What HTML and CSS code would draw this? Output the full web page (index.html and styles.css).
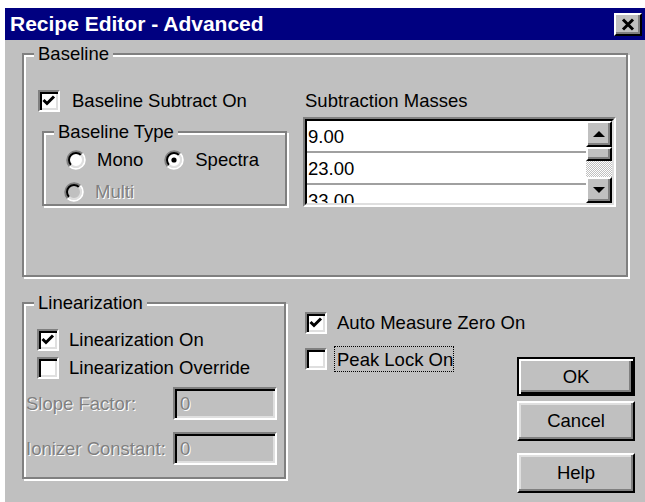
FILE: index.html
```html
<!DOCTYPE html>
<html lang="en">
<head>
<meta charset="utf-8">
<title>Recipe Editor - Advanced</title>
<link rel="stylesheet" href="styles.css">
</head>
<body>
<div class="dialog">
  <div class="titlebar">
    <span class="title">Recipe Editor - Advanced</span>
    <button class="close" type="button" aria-label="Close">
      <svg viewBox="0 0 23 19" width="23" height="19"><path d="M6 4.5 L16 14.5 M16 4.5 L6 14.5" stroke="#000" stroke-width="3" fill="none"/></svg>
    </button>
  </div>

  <div class="client">
    <div class="group baseline">
      <div class="group-title">Baseline</div>
      <div class="baseline-grid">
        <div class="col-left">
          <div class="check check-wide">
            <span class="box"><svg viewBox="0 0 18 18" width="18" height="18"><path d="M3.5 8 L7 11.5 L14 4.5" stroke="#000" stroke-width="3" fill="none"/></svg></span>
            <span>Baseline Subtract On</span>
          </div>
          <div class="group type-group">
            <div class="group-title">Baseline Type</div>
            <div class="radio-row">
              <div class="opt">
                <svg class="radio" viewBox="0 0 20 20" width="20" height="20">
                  <circle cx="10" cy="10" r="7" fill="#fff"/>
                  <path d="M3.64 16.36 A9 9 0 0 1 16.36 3.64" stroke="#808080" stroke-width="2" fill="none"/>
                  <path d="M16.36 3.64 A9 9 0 0 1 3.64 16.36" stroke="#fff" stroke-width="2" fill="none"/>
                  <path d="M5.05 14.95 A7 7 0 0 1 14.95 5.05" stroke="#000" stroke-width="2" fill="none"/>
                  <path d="M14.95 5.05 A7 7 0 0 1 5.05 14.95" stroke="#dfdfdf" stroke-width="2" fill="none"/>
                </svg>
                <span>Mono</span>
              </div>
              <div class="opt">
                <svg class="radio" viewBox="0 0 20 20" width="20" height="20">
                  <circle cx="10" cy="10" r="7" fill="#fff"/>
                  <path d="M3.64 16.36 A9 9 0 0 1 16.36 3.64" stroke="#808080" stroke-width="2" fill="none"/>
                  <path d="M16.36 3.64 A9 9 0 0 1 3.64 16.36" stroke="#fff" stroke-width="2" fill="none"/>
                  <path d="M5.05 14.95 A7 7 0 0 1 14.95 5.05" stroke="#000" stroke-width="2" fill="none"/>
                  <path d="M14.95 5.05 A7 7 0 0 1 5.05 14.95" stroke="#dfdfdf" stroke-width="2" fill="none"/>
                  <circle cx="10" cy="10" r="2.6" fill="#000"/>
                </svg>
                <span>Spectra</span>
              </div>
            </div>
            <div class="radio-row second">
              <div class="opt disabled">
                <svg class="radio" viewBox="0 0 20 20" width="20" height="20">
                  <circle cx="10" cy="10" r="7" fill="#c0c0c0"/>
                  <path d="M3.64 16.36 A9 9 0 0 1 16.36 3.64" stroke="#808080" stroke-width="2" fill="none"/>
                  <path d="M16.36 3.64 A9 9 0 0 1 3.64 16.36" stroke="#fff" stroke-width="2" fill="none"/>
                  <path d="M5.05 14.95 A7 7 0 0 1 14.95 5.05" stroke="#000" stroke-width="2" fill="none"/>
                  <path d="M14.95 5.05 A7 7 0 0 1 5.05 14.95" stroke="#dfdfdf" stroke-width="2" fill="none"/>
                </svg>
                <span class="dim">Multi</span>
              </div>
            </div>
          </div>
        </div>

        <div class="col-right">
          <div class="field-label">Subtraction Masses</div>
          <div class="listbox">
            <div class="list-inner">
              <div class="rows">
                <div class="row">9.00</div>
                <div class="row">23.00</div>
                <div class="row">33.00</div>
              </div>
              <div class="scrollbar">
                <div class="sb-btn"><svg viewBox="0 0 12 6" width="12" height="6"><path d="M0 6 L6 0 L12 6 Z" fill="#000"/></svg></div>
                <div class="sb-thumb"></div>
                <div class="sb-track"></div>
                <div class="sb-btn"><svg viewBox="0 0 12 6" width="12" height="6"><path d="M0 0 L12 0 L6 6 Z" fill="#000"/></svg></div>
              </div>
            </div>
          </div>
        </div>
      </div>
    </div>

    <div class="lower">
      <div class="group linear">
        <div class="group-title">Linearization</div>
        <div class="check lin-first">
          <span class="box"><svg viewBox="0 0 18 18" width="18" height="18"><path d="M3.5 8 L7 11.5 L14 4.5" stroke="#000" stroke-width="3" fill="none"/></svg></span>
          <span>Linearization On</span>
        </div>
        <div class="check lin-second">
          <span class="box"></span>
          <span>Linearization Override</span>
        </div>
        <div class="field first-field">
          <span class="dim">Slope Factor:</span>
          <span class="edit"><span class="dim">0</span></span>
        </div>
        <div class="field second-field">
          <span class="dim">Ionizer Constant:</span>
          <span class="edit"><span class="dim">0</span></span>
        </div>
      </div>

      <div class="options">
        <div class="check auto">
          <span class="box"><svg viewBox="0 0 18 18" width="18" height="18"><path d="M3.5 8 L7 11.5 L14 4.5" stroke="#000" stroke-width="3" fill="none"/></svg></span>
          <span>Auto Measure Zero On</span>
        </div>
        <div class="check peak">
          <span class="box"></span>
          <span class="focus">Peak Lock On</span>
        </div>
      </div>

      <div class="buttons">
        <button class="btn default" type="button">OK</button>
        <button class="btn cancel" type="button">Cancel</button>
        <button class="btn help" type="button">Help</button>
      </div>
    </div>
  </div>
</div>
</body>
</html>
```

FILE: styles.css
```css
html, body {
  margin: 0;
  padding: 0;
  background: #fff;
}

body {
  font-family: "Liberation Sans", Arial, sans-serif;
  font-size: 18.5px;
  color: #000;
}

.dialog {
  margin: 8px 0 0 5px;
  width: 640px;
  height: 494px;
  background: #c0c0c0;
}

/* caption bar */
.titlebar {
  height: 32px;
  background: #000080;
  display: flex;
  align-items: center;
  padding-left: 5px;
}

.title {
  color: #fff;
  font-weight: bold;
  font-size: 21px;
  line-height: 32px;
  white-space: nowrap;
}

.close {
  margin-left: auto;
  margin-right: 3px;
  width: 28px;
  height: 23px;
  padding: 0;
  background: #c0c0c0;
  border: 2px solid;
  border-color: #fff #000 #000 #fff;
  box-shadow: inset -2px -2px 0 #808080;
  display: flex;
  align-items: center;
  justify-content: center;
}

.client {
  padding: 13px 0 0 17px;
}

/* etched group frames */
.group {
  box-sizing: border-box;
  border: 2px solid #808080;
  box-shadow: inset 2px 2px 0 #fff, 2px 2px 0 #fff;
}

.group-title {
  width: fit-content;
  margin: -12px 0 0 10px;
  padding: 0 4px;
  background: #c0c0c0;
  line-height: 21px;
  height: 21px;
  white-space: nowrap;
}

.baseline {
  width: 606px;
  height: 224px;
}

.baseline-grid {
  display: grid;
  grid-template-columns: 265px 313px;
  margin-top: 26px;
  padding-left: 14px;
}

/* checkboxes */
.check {
  display: flex;
  align-items: center;
  gap: 10px;
  height: 22px;
  white-space: nowrap;
}

.check-wide {
  gap: 12px;
}

.box {
  box-sizing: border-box;
  width: 22px;
  height: 22px;
  flex: none;
  background: #fff;
  border: 2px solid;
  border-color: #808080 #fff #fff #808080;
  box-shadow: inset 2px 2px 0 #000, inset -2px -2px 0 #dfdfdf;
  display: flex;
  align-items: center;
  justify-content: center;
}

.box svg {
  display: block;
}

/* radio group */
.type-group {
  margin: 19px 0 0 4px;
  width: 245px;
  height: 75px;
}

.radio-row {
  display: flex;
  align-items: center;
  gap: 21px;
  height: 22px;
  margin-top: 7px;
  padding-left: 22px;
}

.radio-row.second {
  margin-top: 10px;
  padding-left: 20px;
}

.opt {
  display: flex;
  align-items: center;
  gap: 11px;
  white-space: nowrap;
}

.radio {
  display: block;
  flex: none;
}

.dim {
  color: #808080;
  text-shadow: 1px 1px 0 #fff;
}

/* list of masses */
.field-label {
  line-height: 21px;
  height: 21px;
  padding-left: 2px;
  white-space: nowrap;
}

.listbox {
  box-sizing: border-box;
  margin-top: 6px;
  width: 313px;
  height: 90px;
  border: 2px solid;
  border-color: #808080 #fff #fff #808080;
}

.list-inner {
  box-sizing: border-box;
  height: 100%;
  border: 2px solid;
  border-color: #000 #dfdfdf #dfdfdf #000;
  display: flex;
  background: #fff;
}

.rows {
  flex: 1;
  overflow: hidden;
}

.row {
  height: 30px;
  line-height: 31px;
  padding-left: 1px;
  border-bottom: 2px solid #a0a0a0;
}

.scrollbar {
  width: 26px;
  flex: none;
  display: flex;
  flex-direction: column;
}

.sb-btn,
.sb-thumb {
  box-sizing: border-box;
  background: #c0c0c0;
  border: 2px solid;
  border-color: #fff #000 #000 #fff;
  box-shadow: inset -2px -2px 0 #808080;
}

.sb-btn {
  height: 26px;
  display: flex;
  align-items: center;
  justify-content: center;
}

.sb-btn svg {
  display: block;
}

.sb-thumb {
  height: 14px;
}

.sb-track {
  flex: 1;
  background: repeating-conic-gradient(#fff 0 25%, #c0c0c0 0 50%) 0 0 / 2px 2px;
}

/* lower half */
.lower {
  display: flex;
  align-items: flex-start;
  margin-top: 25px;
}

.linear {
  width: 264px;
  height: 177px;
  flex: none;
}

.lin-first {
  margin-top: 16px;
  padding-left: 13px;
}

.lin-second {
  margin-top: 6px;
  padding-left: 13px;
}

.field {
  display: grid;
  grid-template-columns: 147px 104px;
  align-items: center;
  padding-left: 2px;
  white-space: nowrap;
}

.first-field {
  margin-top: 8px;
}

.second-field {
  margin-top: 12px;
}

.edit {
  box-sizing: border-box;
  height: 33px;
  border: 2px solid;
  border-color: #808080 #fff #fff #808080;
  box-shadow: inset 2px 2px 0 #000, inset -2px -2px 0 #dfdfdf;
  padding-left: 5px;
  line-height: 29px;
}

.options {
  flex: 0 0 212px;
  min-width: 0;
  margin-left: 19px;
}

.auto {
  margin-top: 10px;
}

.peak {
  margin-top: 14px;
  gap: 7px;
}

.focus {
  border: 1px dotted #000;
  padding: 1px 0 0 2px;
  line-height: 23px;
}

.buttons {
  display: flex;
  flex-direction: column;
  flex: none;
  margin-top: 55px;
  width: 118px;
}

.btn {
  box-sizing: border-box;
  width: 118px;
  height: 40px;
  padding: 0;
  font: inherit;
  color: #000;
  background: #c0c0c0;
  border: 2px solid;
  border-color: #fff #000 #000 #fff;
  box-shadow: inset -2px -2px 0 #808080, inset 2px 2px 0 #dfdfdf;
}

.btn.default {
  height: 39px;
  border-color: #000;
  box-shadow: inset 2px 2px 0 #fff, inset -2px -2px 0 #000, inset -4px -4px 0 #808080;
}

.btn.cancel {
  margin-top: 5px;
}

.btn.help {
  margin-top: 12px;
}
```
